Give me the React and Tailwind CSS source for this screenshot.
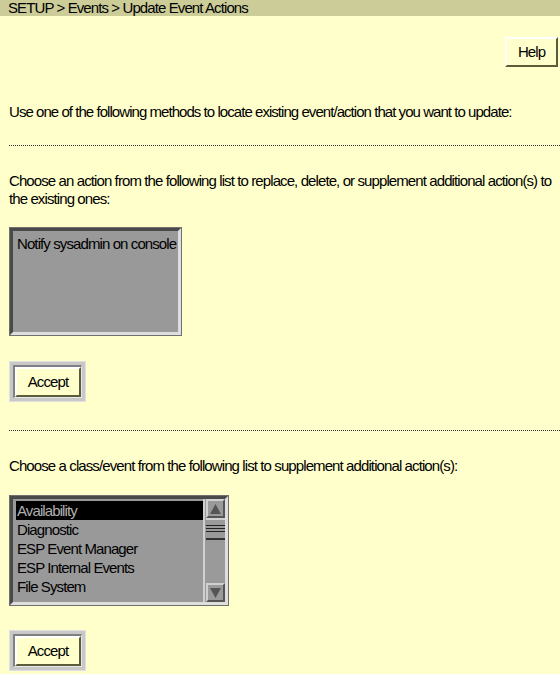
import React from "react";

const font = { fontFamily: '"Liberation Sans", Arial, sans-serif' };

function Btn({ children }) {
  return (
    <div className="inline-block bg-[#c8c8c8] p-[3px] border border-[#e0e0e0]">
      <div className="border-t-2 border-l-2 border-[#808080] border-r border-b border-r-[#e8e8e8] border-b-[#e8e8e8]">
        <div className="bg-[#ffffcc] border-t-2 border-l-2 border-t-white border-l-white border-b-2 border-r-2 border-b-[#5c5c3c] border-r-[#5c5c3c] w-[66px] h-[30px] flex items-center justify-center text-[15px] tracking-[-0.9px] text-black">
          {children}
        </div>
      </div>
    </div>
  );
}

function Sunken({ className, children }) {
  return (
    <div className={"border border-[#707070] " + className}>
      <div className="h-full border-t-[3px] border-l-[3px] border-t-[#4a4a4a] border-l-[#4a4a4a] border-b-[3px] border-r-[3px] border-b-[#dedede] border-r-[#dedede] bg-[#999999]">
        {children}
      </div>
    </div>
  );
}

function Arrow({ up }) {
  return (
    <div className="h-[19px] w-[19px] bg-[#9a9a9a] border-t-2 border-l-2 border-t-[#d0d0d0] border-l-[#d0d0d0] border-b-2 border-r-2 border-b-[#555] border-r-[#555] flex items-center justify-center">
      <svg width="11" height="10" viewBox="0 0 11 10">
        {up ? <polygon points="5.5,0 11,10 0,10" fill="#555" /> : <polygon points="0,0 11,0 5.5,10" fill="#555" />}
      </svg>
    </div>
  );
}

export default function App() {
  const items = ["Availability", "Diagnostic", "ESP Event Manager", "ESP Internal Events", "File System"];
  return (
    <div className="w-[560px] h-[674px] bg-[#ffffcc] overflow-hidden text-black tracking-[-0.9px]" style={font}>
      <div className="h-[16px] bg-[#cccc99] text-[15px] leading-[15px] pl-[8px]">
        SETUP &gt; Events &gt; Update Event Actions
      </div>
      <div className="flex justify-end pr-[2px] mt-[21px]">
        <div className="h-[30px] w-[53px] bg-[#ffffcc] border-t-2 border-l-2 border-t-white border-l-white border-b-2 border-r-2 border-b-[#5c5c3c] border-r-[#5c5c3c] flex items-center justify-center text-[15px]">
          Help
        </div>
      </div>
      <div className="pl-[9px] mt-[36px] text-[15px] leading-[18px] tracking-[-0.95px]">
        Use one of the following methods to locate existing event/action that you want to update:
      </div>
      <div className="ml-[9px] mt-[24px] border-t border-dotted border-[#333]" />
      <div className="pl-[9px] pr-[8px] mt-[26px] text-[15px] leading-[18px]">
        Choose an action from the following list to replace, delete, or supplement additional action(s) to the existing ones:
      </div>
      <div className="pl-[9px] mt-[19px]">
        <Sunken className="w-[173px] h-[109px]">
          <div className="pl-[4px] pt-[4px] text-[15px] leading-[18px] whitespace-nowrap">Notify sysadmin on console</div>
        </Sunken>
      </div>
      <div className="pl-[9px] mt-[25px]">
        <Btn>Accept</Btn>
      </div>
      <div className="ml-[9px] mt-[28px] border-t border-dotted border-[#333]" />
      <div className="pl-[9px] mt-[26px] text-[15px] leading-[18px]">
        Choose a class/event from the following list to supplement additional action(s):
      </div>
      <div className="pl-[9px] mt-[20px]">
        <Sunken className="w-[220px] h-[111px]">
          <div className="flex h-full">
            <div className="flex-1 pl-[3px] pt-[2px] border-r-2 border-r-[#d0d0d0]">
              {items.map((t, i) => (
                <div
                  key={t}
                  className={
                    "h-[19px] leading-[19px] text-[15px] pl-[1px] " +
                    (i === 0 ? "bg-black text-[#b0b0b0]" : "")
                  }
                >
                  {t}
                </div>
              ))}
            </div>
            <div className="w-[20px] flex flex-col bg-[#9a9a9a] pl-[1px]">
              <Arrow up />
              <div className="flex-1 relative">
                <div className="absolute left-0 top-0 w-[19px] h-[22px] bg-[#9a9a9a] border-t-2 border-t-[#d0d0d0] border-b-2 border-b-[#333]">
                  <div className="mt-[5px] border-t border-[#222]" />
                  <div className="mt-[2px] border-t border-[#222]" />
                  <div className="mt-[2px] border-t border-[#222]" />
                </div>
              </div>
              <Arrow />
            </div>
          </div>
        </Sunken>
      </div>
      <div className="pl-[9px] mt-[24px]">
        <Btn>Accept</Btn>
      </div>
    </div>
  );
}
